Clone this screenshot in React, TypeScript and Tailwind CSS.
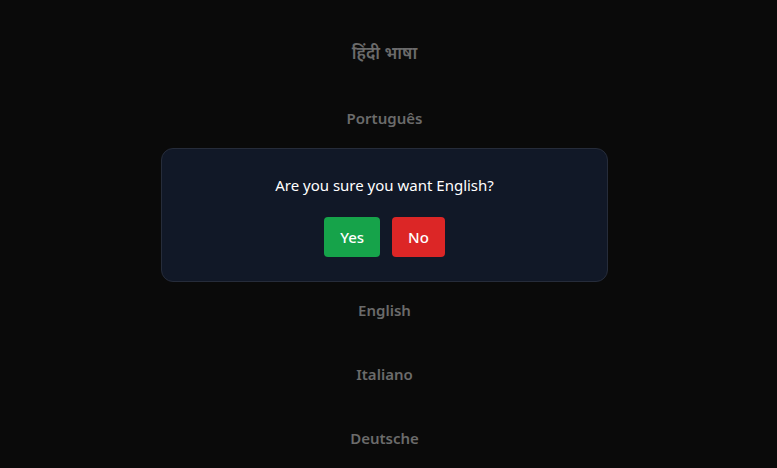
import { useState } from "react";

const languages = [
  { label: "हिंदी भाषा", big: true },
  { label: "Português" },
  { label: "Español", hidden: true },
  { label: "Français", hidden: true },
  { label: "English" },
  { label: "Italiano" },
  { label: "Deutsche" },
];

export default function App() {
  const [pending, setPending] = useState<string | null>("English");

  return (
    <div
      className="relative min-h-[468px] bg-[#0a0a0a] overflow-hidden"
      style={{ fontFamily: '"Noto Sans", "Open Sans", sans-serif' }}
    >
      {/* Language list */}
      <ul className="flex flex-col items-center gap-10 pt-10 pr-2">
        {languages.map((lang) => (
          <li key={lang.label} className={lang.hidden ? "invisible" : ""}>
            <button
              onClick={() => setPending(lang.label)}
              className={`font-semibold text-[#6b6b6b] hover:text-gray-300 transition-colors ${
                lang.big ? "text-[17px] leading-[26px]" : "text-[15px] leading-6"
              }`}
            >
              {lang.label}
            </button>
          </li>
        ))}
      </ul>

      {/* Confirm dialog */}
      {pending && (
        <div className="absolute top-[148px] left-[161px] w-[447px] bg-[#111827] border border-[#262c3a] rounded-xl p-6 flex flex-col items-center">
          <p className="text-white text-[15px] leading-6">Are you sure you want {pending}?</p>
          <div className="flex gap-3 mt-5">
            <button
              onClick={() => setPending(null)}
              className="bg-[#16a34a] text-white text-[15px] leading-6 font-medium px-4 py-2 rounded"
            >
              Yes
            </button>
            <button
              onClick={() => setPending(null)}
              className="bg-[#dc2626] text-white text-[15px] leading-6 font-medium px-4 py-2 rounded"
            >
              No
            </button>
          </div>
        </div>
      )}
    </div>
  );
}
